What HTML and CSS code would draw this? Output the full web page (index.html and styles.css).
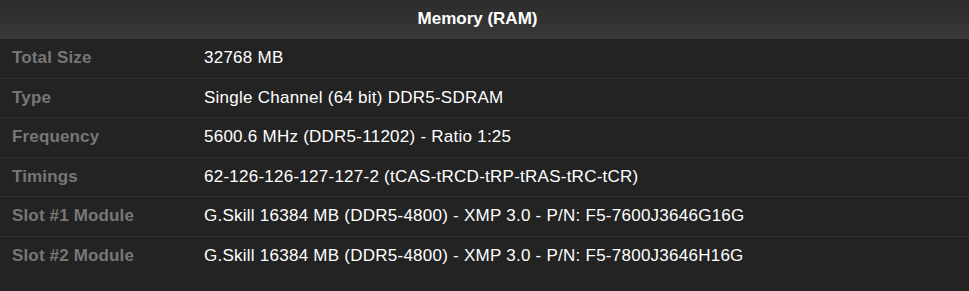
FILE: index.html
```html
<!DOCTYPE html>
<html>
<head>
<meta charset="utf-8">
<link rel="stylesheet" href="styles.css">
</head>
<body>
<div class="panel">
  <div class="head">Memory (RAM)</div>
  <div class="row"><div class="label">Total Size</div><div class="value">32768 MB</div></div>
  <div class="row"><div class="label">Type</div><div class="value">Single Channel (64 bit) DDR5-SDRAM</div></div>
  <div class="row"><div class="label">Frequency</div><div class="value">5600.6 MHz (DDR5-11202) - Ratio 1:25</div></div>
  <div class="row"><div class="label">Timings</div><div class="value">62-126-126-127-127-2 (tCAS-tRCD-tRP-tRAS-tRC-tCR)</div></div>
  <div class="row"><div class="label">Slot #1 Module</div><div class="value">G.Skill 16384 MB (DDR5-4800) - XMP 3.0 - P/N: F5-7600J3646G16G</div></div>
  <div class="row last"><div class="label">Slot #2 Module</div><div class="value">G.Skill 16384 MB (DDR5-4800) - XMP 3.0 - P/N: F5-7800J3646H16G</div></div>
</div>
</body>
</html>
```
FILE: styles.css
```css
html, body {
  margin: 0;
  padding: 0;
  background: #232323;
  font-family: "Liberation Sans", Arial, sans-serif;
  font-size: 17px;
}
.panel {
  display: flex;
  flex-direction: column;
}
.head {
  height: 38px;
  line-height: 38px;
  text-align: center;
  padding-right: 14px;
  color: #ffffff;
  font-weight: bold;
  background: linear-gradient(#2c2c2c, #383838);
  border-bottom: 1px dotted #4a4a4a;
}
.row {
  display: flex;
  height: 38.5px;
  align-items: center;
  border-bottom: 1px dotted #3c3c3c;
}
.row.last {
  border-bottom: none;
}
.label {
  width: 192px;
  padding-left: 12px;
  color: #777777;
  font-weight: bold;
  letter-spacing: 0.15px;
}
.value {
  color: #ffffff;
  letter-spacing: 0.25px;
}
```
